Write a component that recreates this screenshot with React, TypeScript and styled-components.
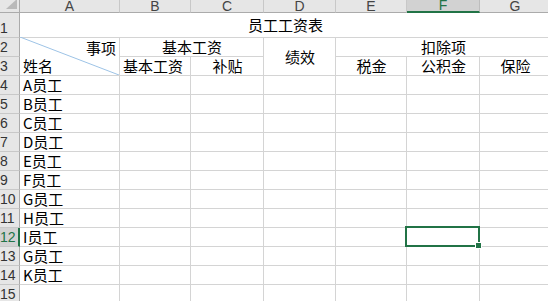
import React from 'react';
import styled, { createGlobalStyle } from 'styled-components';

const GlobalStyle = createGlobalStyle`
	html, body {
		margin: 0;
		padding: 0;
		background: #ffffff;
		overflow: hidden;
	}
`;

const green = '#217346';
const gridLine = '#d4d4d4';
const headBg = '#e6e6e6';
const headSelBg = '#d2d2d2';

const cols = [20, 100, 71, 73, 72, 71, 73, 71];
const letters = ['A', 'B', 'C', 'D', 'E', 'F', 'G'];
const names = ['A', 'B', 'C', 'D', 'E', 'F', 'G', 'H', 'I', 'G', 'K'];
const SELECTED_COL = 'F';
const SELECTED_ROW = 12;

const Sheet = styled.div`
	position: relative;
	display: grid;
	grid-template-columns: ${cols.map((c) => `${c}px`).join(' ')};
	grid-template-rows: 13px 25px repeat(14, 19px);
	width: ${cols.reduce((a, b) => a + b, 0)}px;
	font-family: 'Noto Sans CJK SC', 'Liberation Sans', sans-serif;
	font-size: 15px;
	color: #000000;
`;

const Corner = styled.div`
	position: relative;
	background: ${headBg};
	border-right: 1px solid #ababab;
	border-bottom: 1px solid #ababab;
	box-sizing: border-box;
	overflow: hidden;

	&::after {
		content: '';
		position: absolute;
		right: 2px;
		bottom: 3px;
		border-left: 11px solid transparent;
		border-bottom: 10px solid #b9b9b9;
	}
`;

const ColHead = styled.div<{ $selected?: boolean }>`
	display: flex;
	align-items: flex-end;
	justify-content: center;
	box-sizing: border-box;
	overflow: hidden;
	background: ${(p) => (p.$selected ? headSelBg : headBg)};
	border-right: 1px solid ${(p) => (p.$selected ? '#bdbdbd' : '#c8c8c8')};
	border-bottom: ${(p) => (p.$selected ? `2px solid ${green}` : '1px solid #ababab')};
	color: ${(p) => (p.$selected ? green : '#444444')};
	font-family: 'Liberation Sans', Arial, sans-serif;
	font-size: 14px;
	line-height: 12px;
`;

const RowHead = styled.div<{ $selected?: boolean }>`
	display: flex;
	align-items: flex-end;
	box-sizing: border-box;
	padding-left: 0;
	background: ${(p) => (p.$selected ? headSelBg : headBg)};
	border-right: ${(p) => (p.$selected ? `2px solid ${green}` : '1px solid #ababab')};
	border-bottom: 1px solid #c8c8c8;
	color: ${(p) => (p.$selected ? green : '#333333')};
	font-family: 'Liberation Sans', Arial, sans-serif;
	font-size: 14px;
	line-height: 18px;
	white-space: nowrap;
`;

const Cell = styled.div<{ $span?: number; $rows?: number; $align?: 'left' | 'center' | 'right' }>`
	display: flex;
	align-items: center;
	justify-content: ${(p) =>
		p.$align === 'center' ? 'center' : p.$align === 'right' ? 'flex-end' : 'flex-start'};
	grid-column: span ${(p) => p.$span || 1};
	grid-row: span ${(p) => p.$rows || 1};
	box-sizing: border-box;
	padding: 0 2px 0 3px;
	border-right: 1px solid ${gridLine};
	border-bottom: 1px solid ${gridLine};
	line-height: 18px;
	white-space: nowrap;
`;

const SplitCell = styled(Cell)`
	position: relative;
	flex-direction: column;
	align-items: stretch;
	justify-content: space-between;
	padding: 0 3px 0 3px;

	svg {
		position: absolute;
		left: 0;
		top: -1px;
		width: 100%;
		height: calc(100% + 1px);
	}
`;

const SplitTop = styled.span`
	align-self: flex-end;
	margin-top: 1px;
`;

const SplitBottom = styled.span`
	align-self: flex-start;
`;

const Selection = styled.div`
	position: absolute;
	left: 405px;
	top: 226px;
	width: 75px;
	height: 21px;
	box-sizing: border-box;
	border: 2px solid ${green};
	pointer-events: none;
`;

const FillHandle = styled.div`
	position: absolute;
	right: -4px;
	bottom: -4px;
	width: 5px;
	height: 5px;
	background: ${green};
	border: 1px solid #ffffff;
`;

const App: React.FC = () => {
	return (
		<>
			<GlobalStyle />
			<Sheet>
				{/* 列标题 */}
				<Corner />
				{letters.map((l) => (
					<ColHead key={l} $selected={l === SELECTED_COL}>
						{l}
					</ColHead>
				))}

				{/* 1 */}
				<RowHead>1</RowHead>
				<Cell $span={7} $align='center'>
					员工工资表
				</Cell>

				{/* 2 */}
				<RowHead>2</RowHead>
				<SplitCell $rows={2}>
					<svg viewBox='0 0 100 100' preserveAspectRatio='none'>
						<line
							x1='0'
							y1='0'
							x2='100'
							y2='100'
							stroke='#9dc3e6'
							strokeWidth='1'
							vectorEffect='non-scaling-stroke'
						/>
					</svg>
					<SplitTop>事项</SplitTop>
					<SplitBottom>姓名</SplitBottom>
				</SplitCell>
				<Cell $span={2} $align='center'>
					基本工资
				</Cell>
				<Cell $rows={2} $align='center'>
					绩效
				</Cell>
				<Cell $span={3} $align='center'>
					扣除项
				</Cell>

				{/* 3 */}
				<RowHead>3</RowHead>
				<Cell>基本工资</Cell>
				<Cell $align='center'>补贴</Cell>
				<Cell $align='center'>税金</Cell>
				<Cell $align='center'>公积金</Cell>
				<Cell $align='center'>保险</Cell>

				{/* 员工 */}
				{names.map((n, i) => (
					<React.Fragment key={i}>
						<RowHead $selected={i + 4 === SELECTED_ROW}>{i + 4}</RowHead>
						<Cell>{n}员工</Cell>
						{letters.slice(1).map((l) => (
							<Cell key={l} />
						))}
					</React.Fragment>
				))}

				<RowHead>15</RowHead>
				{letters.map((l) => (
					<Cell key={l} />
				))}

				<Selection>
					<FillHandle />
				</Selection>
			</Sheet>
		</>
	);
};

export default App;
